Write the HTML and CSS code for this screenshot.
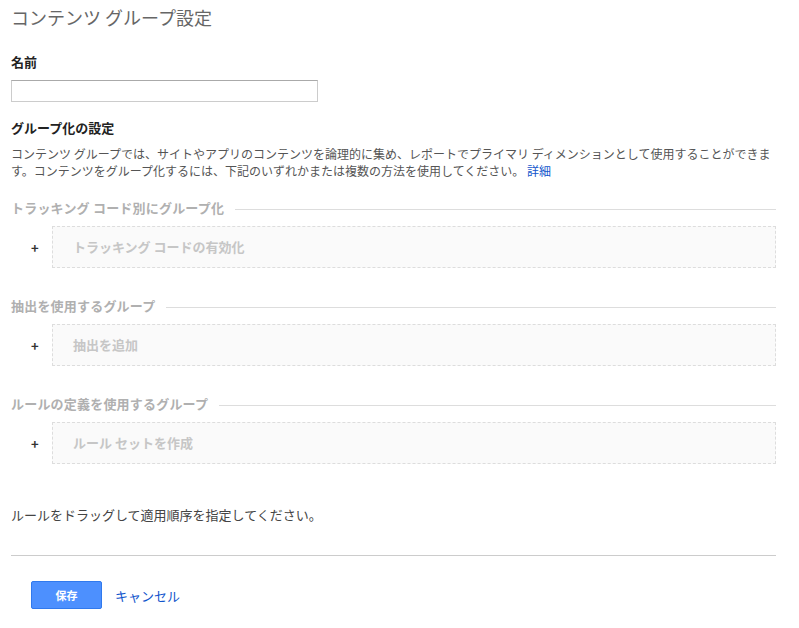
FILE: index.html
```html
<!DOCTYPE html>
<html lang="ja">
<head>
    <meta charset="UTF-8">
    <title>コンテンツ グループ設定</title>
    <link rel="stylesheet" href="styles.css">
</head>
<body>

<div class="page">
    <h1 class="title">コンテンツ グループ設定</h1>

    <!-- 名前 -->
    <label class="field-label" for="group-name">名前</label>
    <input class="name-input" type="text" id="group-name" name="group-name">

    <!-- グループ化の設定 -->
    <h3 class="section-title">グループ化の設定</h3>
    <p class="intro">コンテンツ グループでは、サイトやアプリのコンテンツを論理的に集め、レポートでプライマリ ディメンションとして使用することができます。コンテンツをグループ化するには、下記のいずれかまたは複数の方法を使用してください。 <a href="#" class="link">詳細</a></p>

    <div class="group">
        <div class="group-head"><span>トラッキング コード別にグループ化</span></div>
        <div class="group-row">
            <span class="plus">+</span>
            <div class="drop-box">トラッキング コードの有効化</div>
        </div>
    </div>

    <div class="group">
        <div class="group-head"><span>抽出を使用するグループ</span></div>
        <div class="group-row">
            <span class="plus">+</span>
            <div class="drop-box">抽出を追加</div>
        </div>
    </div>

    <div class="group">
        <div class="group-head"><span>ルールの定義を使用するグループ</span></div>
        <div class="group-row">
            <span class="plus">+</span>
            <div class="drop-box">ルール セットを作成</div>
        </div>
    </div>

    <p class="hint">ルールをドラッグして適用順序を指定してください。</p>

    <div class="actions">
        <button type="button" class="save-button">保存</button>
        <a href="#" class="link cancel">キャンセル</a>
    </div>
</div>

</body>
</html>
```

FILE: styles.css
```css
body {
    margin: 0;
    font-family: "Noto Sans CJK JP", "Noto Sans", sans-serif;
    color: #333;
    background-color: #fff;
}
.page {
    width: 765px;
    padding: 0 0 20px 11px;
}
.title {
    margin: 0;
    padding-top: 5px;
    font-size: 18px;
    line-height: 24px;
    font-weight: 400;
    color: #666;
}
.field-label {
    display: block;
    margin-top: 24px;
    font-size: 13px;
    line-height: 18px;
    font-weight: 700;
    color: #222;
}
.name-input {
    display: block;
    box-sizing: border-box;
    width: 307px;
    height: 22px;
    margin: 9px 0 0;
    padding: 2px 4px;
    border: 1px solid #ccc;
    border-top-color: #aaa;
    font-size: 13px;
}
.section-title {
    margin: 17px 0 0;
    font-size: 13px;
    line-height: 18px;
    font-weight: 700;
    color: #222;
}
.intro {
    margin: 8px 0 0;
    font-size: 12px;
    line-height: 17px;
    color: #555;
}
.link {
    color: #15c;
    text-decoration: none;
}
.group {
    margin-top: 29px;
}
.intro + .group {
    margin-top: 20px;
}
.group-head {
    display: flex;
    align-items: center;
    font-size: 13px;
    line-height: 18px;
    font-weight: 700;
    letter-spacing: 0.2px;
    color: #b0b0b0;
}
.group-head::after {
    content: "";
    flex: 1;
    height: 1px;
    margin: 3px 0 0 11px;
    background-color: #ddd;
}
.group-row {
    display: flex;
    align-items: center;
    margin-top: 9px;
}
.plus {
    box-sizing: border-box;
    width: 41px;
    padding-left: 20px;
    font-size: 13px;
    font-weight: 700;
    color: #333;
}
.drop-box {
    flex: 1;
    box-sizing: border-box;
    height: 42px;
    padding: 0 20px;
    border: 1px dashed #ddd;
    background-color: #fafafa;
    font-size: 13px;
    line-height: 40px;
    font-weight: 700;
    color: #c6c6c6;
}
.hint {
    margin: 42px 0 0;
    padding-bottom: 31px;
    border-bottom: 1px solid #ccc;
    font-size: 13px;
    line-height: 18px;
    color: #444;
}
.actions {
    display: flex;
    align-items: center;
    margin-top: 25px;
    padding-left: 20px;
}
.save-button {
    width: 71px;
    height: 28px;
    border: 1px solid #3079ed;
    border-radius: 2px;
    background-color: #4d90fe;
    color: #fff;
    font-family: inherit;
    font-size: 11px;
    font-weight: 700;
    cursor: pointer;
}
.cancel {
    margin-left: 13px;
    font-size: 13px;
}
```
